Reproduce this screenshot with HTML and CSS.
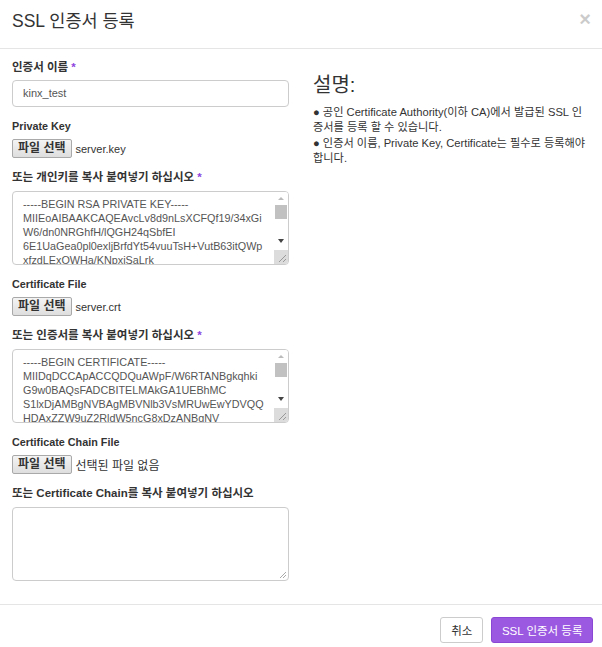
FILE: index.html
```html
<!DOCTYPE html>
<html lang="ko">
<head>
<meta charset="utf-8">
<title>SSL 인증서 등록</title>
<link rel="stylesheet" href="styles.css">
</head>
<body>
<div class="modal">
  <div class="modal-header">
    <h3 class="modal-title">SSL 인증서 등록</h3>
    <span class="close">×</span>
  </div>
  <div class="modal-body">
    <div class="col-left">
      <div class="form-group">
        <label class="lbl">인증서 이름 <span class="req">*</span></label>
        <div class="input">kinx_test</div>
      </div>
      <div class="form-group">
        <label class="lbl en">Private Key</label>
        <div class="file-row"><span class="file-btn">파일 선택</span><span class="file-name">server.key</span></div>
      </div>
      <div class="form-group">
        <label class="lbl">또는 개인키를 복사 붙여넣기 하십시오 <span class="req">*</span></label>
        <div class="textarea">
          <div class="ta-text">-----BEGIN RSA PRIVATE KEY-----
MIIEoAIBAAKCAQEAvcLv8d9nLsXCFQf19/34xGi
W6/dn0NRGhfH/lQGH24qSbfEI
6E1UaGea0pl0exljBrfdYt54vuuTsH+VutB63itQWp
xfzdLExOWHa/KNpxiSaLrk</div>
          <div class="sb">
            <div class="sb-track">
              <span class="sb-arrow up"></span>
              <span class="sb-thumb"></span>
              <span class="sb-space"></span>
              <span class="sb-arrow down"></span>
            </div>
            <div class="sb-corner"><svg width="14" height="14" viewBox="0 0 14 14"><path d="M12 5 L5 12 M12 9 L9 12" stroke="#999" stroke-width="1"/></svg></div>
          </div>
        </div>
      </div>
      <div class="form-group">
        <label class="lbl en">Certificate File</label>
        <div class="file-row"><span class="file-btn">파일 선택</span><span class="file-name">server.crt</span></div>
      </div>
      <div class="form-group">
        <label class="lbl">또는 인증서를 복사 붙여넣기 하십시오 <span class="req">*</span></label>
        <div class="textarea">
          <div class="ta-text">-----BEGIN CERTIFICATE-----
MIIDqDCCApACCQDQuAWpF/W6RTANBgkqhki
G9w0BAQsFADCBITELMAkGA1UEBhMC
S1lxDjAMBgNVBAgMBVNlb3VsMRUwEwYDVQQ
HDAxZZW9uZ2RldW5ncG8xDzANBgNV</div>
          <div class="sb">
            <div class="sb-track">
              <span class="sb-arrow up"></span>
              <span class="sb-thumb"></span>
              <span class="sb-space"></span>
              <span class="sb-arrow down"></span>
            </div>
            <div class="sb-corner"><svg width="14" height="14" viewBox="0 0 14 14"><path d="M12 5 L5 12 M12 9 L9 12" stroke="#999" stroke-width="1"/></svg></div>
          </div>
        </div>
      </div>
      <div class="form-group">
        <label class="lbl en">Certificate Chain File</label>
        <div class="file-row"><span class="file-btn">파일 선택</span><span class="file-name ko">선택된 파일 없음</span></div>
      </div>
      <div class="form-group">
        <label class="lbl">또는 Certificate Chain를 복사 붙여넣기 하십시오</label>
        <div class="textarea empty">
          <div class="ta-text"></div>
          <div class="grip"><svg width="10" height="10" viewBox="0 0 10 10"><path d="M9 3 L3 9 M9 6 L6 9" stroke="#aaa" stroke-width="1"/></svg></div>
        </div>
      </div>
    </div>
    <div class="col-right">
      <h4 class="desc-title">설명:</h4>
      <p class="desc">● 공인 Certificate Authority(이하 CA)에서 발급된 SSL 인증서를 등록 할 수 있습니다.<br>● 인증서 이름, Private Key, Certificate는 필수로 등록해야 합니다.</p>
    </div>
  </div>
  <div class="modal-footer">
    <button class="btn btn-default">취소</button>
    <button class="btn btn-primary">SSL 인증서 등록</button>
  </div>
</div>
</body>
</html>
```
FILE: styles.css
```css
* { box-sizing: border-box; }
html, body { margin: 0; padding: 0; height: 100%; }
body {
  font-family: "Liberation Sans", "Noto Sans CJK KR", sans-serif;
  font-size: 11.5px;
  color: #333;
  background: #fff;
}
.modal { display: flex; flex-direction: column; height: 647px; }
.modal-header {
  height: 49px;
  border-bottom: 1px solid #e5e5e5;
  display: flex;
  align-items: flex-start;
  justify-content: space-between;
  padding: 9px 12px 0 12px;
}
.modal-title { margin: 0; font-size: 17.5px; font-weight: normal; line-height: 24px; color: #333; }
.close {
  font-size: 20px; font-weight: bold; color: #000; opacity: 0.2;
  line-height: 16px; margin-top: 2px; margin-right: -1px;
}
.modal-body {
  flex: 1;
  display: grid;
  grid-template-columns: 277px 277px;
  column-gap: 24px;
  padding: 10px 12px 0 12px;
}
.col-left { display: flex; flex-direction: column; }
.form-group { display: flex; flex-direction: column; align-items: flex-start; margin-bottom: 11px; }
.lbl { font-weight: bold; line-height: 16px; margin-bottom: 5px; color: #333; font-size: 11.5px; }
.lbl.en { font-size: 10.8px; }
.req { color: #8e44e0; }
.input {
  width: 100%; height: 27px; border: 1px solid #ccc; border-radius: 4px;
  padding: 0 10px; line-height: 25px; color: #555; font-size: 11px;
}
.file-row { display: flex; align-items: center; height: 19px; }
.file-btn {
  height: 19px; line-height: 17px; padding: 0 5px;
  border: 1px solid #a9a9a9; border-radius: 2px;
  background: linear-gradient(#f4f4f4, #dedede);
  font-weight: bold; color: #333; font-size: 12px;
}
.file-name { margin-left: 4px; color: #333; font-size: 11px; }
.file-name.ko { font-size: 12px; }
.textarea {
  width: 100%; height: 74px; border: 1px solid #ccc; border-radius: 4px;
  display: flex; overflow: hidden; position: relative;
}
.form-group .textarea { margin-top: 1px; }
.ta-text {
  flex: 1; white-space: pre; overflow: hidden;
  padding: 5px 0 0 10px; line-height: 14px; color: #555; font-size: 10.8px;
}
.sb { width: 14px; display: flex; flex-direction: column; }
.sb-track { flex: 1; display: flex; flex-direction: column; align-items: center; background: #fff; padding-top: 3px; }
.sb-arrow { width: 0; height: 0; border-left: 3px solid transparent; border-right: 3px solid transparent; }
.sb-arrow.up { border-bottom: 3px solid #bbb; margin-top: 2px; }
.sb-arrow.down { border-top: 4px solid #444; margin-bottom: 7px; }
.sb-thumb { width: 12px; height: 14px; background: #c1c1c1; margin-top: 5px; }
.sb-space { flex: 1; }
.sb-corner { height: 14px; background: #dcdcdc; }
.sb-corner svg { display: block; }
.grip { position: absolute; right: 1px; bottom: 1px; }
.grip svg { display: block; }
.col-right { padding-top: 15px; }
.desc-title { margin: 0 0 9px 0; font-size: 20px; font-weight: normal; line-height: 22px; color: #333; }
.desc { margin: 0; line-height: 15.3px; font-size: 11.2px; color: #333; word-break: break-all; }
.modal-footer {
  border-top: 1px solid #e5e5e5;
  height: 43px;
  display: flex; justify-content: flex-end; align-items: flex-start;
  padding: 12px 9px 0 0; gap: 8px;
}
.btn {
  height: 26px; border-radius: 3px; font-family: inherit; font-size: 11.5px;
  padding: 0 10px; cursor: pointer;
}
.btn-default { background: #fff; border: 1px solid #ccc; color: #333; }
.btn-primary { background: #9b59e1; border: 1px solid #8a47d4; color: #fff; padding: 0 9.5px; }
```
